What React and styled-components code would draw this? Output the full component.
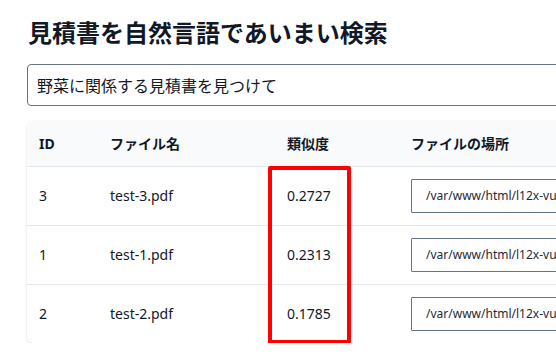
import React from "react";
import styled, { createGlobalStyle } from "styled-components";

const GlobalStyle = createGlobalStyle`
  html, body {
    margin: 0;
    padding: 0;
    overflow: hidden;
    background: #fff;
  }
  body {
    font-family: "Noto Sans", "Noto Sans CJK JP", sans-serif;
    color: #111827;
  }
`;

const Page = styled.div`
  width: 1000px;
  padding: 16px 27px 0;
`;

const Title = styled.h1`
  margin: 0 0 16px 1px;
  font-size: 24px;
  line-height: 32px;
  font-weight: 700;
  font-family: "Noto Sans CJK JP", sans-serif;
`;

const SearchInput = styled.input`
  display: block;
  box-sizing: border-box;
  width: 100%;
  height: 42px;
  padding: 0 9px;
  border: 1px solid #6b7280;
  border-radius: 4px;
  font-size: 16px;
  font-family: "Noto Sans CJK JP", sans-serif;
  color: #111827;
  outline: none;
`;

const Card = styled.div`
  position: relative;
  margin-top: 15px;
  border-radius: 6px;
  background: #fff;
  box-shadow: 0 1px 3px rgba(0, 0, 0, 0.1), 0 1px 2px rgba(0, 0, 0, 0.06);
`;

const Table = styled.table`
  width: 100%;
  border-collapse: collapse;
  font-size: 14px;
`;

const HeadRow = styled.tr`
  background: #f9fafb;
  height: 45px;
`;

const Th = styled.th`
  text-align: left;
  padding: 0 12px;
  font-weight: 700;
  width: ${(p) => p.$w || "auto"};
  font-family: "Noto Sans", "Noto Sans CJK JP", sans-serif;
`;

const Row = styled.tr`
  height: 59px;
  border-top: 1px solid #e5e7eb;
`;

const Td = styled.td`
  padding: 0 12px;
`;

const PathInput = styled.input`
  box-sizing: border-box;
  width: 400px;
  height: 34px;
  padding: 0 14px;
  border: 1px solid #64748b;
  border-radius: 1px;
  font-size: 12px;
  font-family: "Noto Sans", sans-serif;
  color: #1f2937;
  outline: none;
`;

const Highlight = styled.div`
  position: absolute;
  left: 241px;
  top: 45px;
  width: 83px;
  height: 178px;
  box-sizing: border-box;
  border: 4px solid #ff0000;
  border-radius: 2px;
  pointer-events: none;
`;

const rows = [
  { id: 3, name: "test-3.pdf", score: "0.2727" },
  { id: 1, name: "test-1.pdf", score: "0.2313" },
  { id: 2, name: "test-2.pdf", score: "0.1785" },
];

export default function App() {
  return (
    <Page>
      <GlobalStyle />
      <Title>見積書を自然言語であいまい検索</Title>
      <SearchInput defaultValue="野菜に関係する見積書を見つけて" />
      <Card>
        <Table>
          <thead>
            <HeadRow>
              <Th $w="47px">ID</Th>
              <Th $w="153px">ファイル名</Th>
              <Th $w="100px">類似度</Th>
              <Th>ファイルの場所</Th>
            </HeadRow>
          </thead>
          <tbody>
            {rows.map((r) => (
              <Row key={r.id}>
                <Td>{r.id}</Td>
                <Td>{r.name}</Td>
                <Td>{r.score}</Td>
                <Td>
                  <PathInput readOnly value={`/var/www/html/l12x-vue/storage/app/${r.name}`} />
                </Td>
              </Row>
            ))}
          </tbody>
        </Table>
        <Highlight />
      </Card>
    </Page>
  );
}
